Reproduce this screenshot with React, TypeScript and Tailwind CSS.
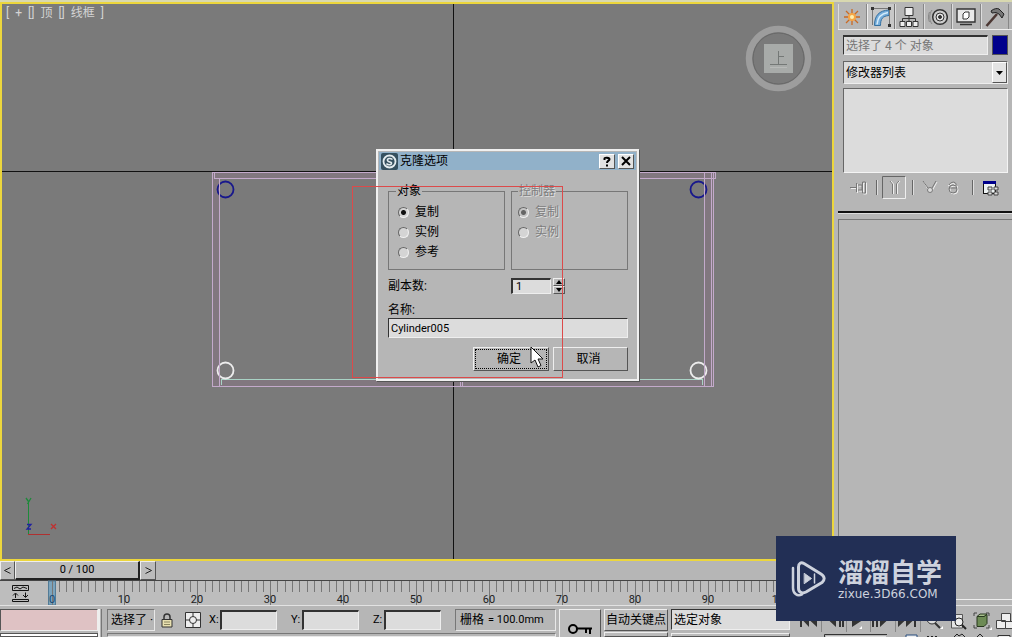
import React, { useState } from "react";

const FONT = "font-['Roboto','Noto_Sans_CJK_SC',sans-serif]";
const SUNKEN =
  "border border-t-[#333] border-l-[#333] border-b-[#eee] border-r-[#eee] bg-[#dcdcdc]";
const RAISED =
  "border border-t-[#eee] border-l-[#eee] border-b-[#555] border-r-[#555] bg-[#bbb]";
const GROOVE =
  "border border-t-[#777] border-l-[#777] border-b-[#e8e8e8] border-r-[#e8e8e8]";

function Scene() {
  return (
    <svg
      className="absolute left-0 top-0"
      width="830"
      height="555"
      viewBox="2 4 830 555"
      fill="none"
      shapeRendering="crispEdges"
      aria-hidden="true"
    >
      <g fill="#81777f">
        <path d="M212 172H715V179H212zM212 172H220V386H212zM704 172H713V386H704zM212 380H713V386H212z" />
      </g>
      <path d="M2 171.500H832M453.500 4V559" stroke="#111" />
      <path
        d="M212.500 386.500V172.500H715.500V178.500H214.500V173M219.500 178V386M212.500 386.500H713.500V172M704.500 172V386M711.500 172V386M460.500 382V386M462.500 382V386"
        stroke="#c3aacb"
      />
      <path d="M221.500 385V379.500H702.500V385" stroke="#a9d3c5" />
      <g shapeRendering="auto" strokeWidth="1.8">
        <circle cx="225.500" cy="189.500" r="8" stroke="#18188c" />
        <circle cx="698.500" cy="189.500" r="8" stroke="#18188c" />
        <circle cx="225.500" cy="370.500" r="8" stroke="#ededed" />
        <circle cx="698.500" cy="370.500" r="8" stroke="#ededed" />
      </g>
      <path d="M219.500 180V380M704.500 180V380" stroke="#c3aacb" />
      <path d="M28.500 534V503" stroke="#1d8a3a" />
      <path d="M28 534.500H50" stroke="#b03030" />
      <g shapeRendering="auto" strokeWidth="1.300">
        <path d="M26 498l2.500 3.500M31 498l-3.500 6" stroke="#1d8a3a" />
        <path d="M51 524l5 5M56 524l-5 5" stroke="#c03030" />
        <path d="M27 524.500h4l-4 4.500h4" stroke="#2020a0" />
      </g>
      <g shapeRendering="auto">
        <circle cx="778.500" cy="58.500" r="29.500" stroke="#9d9d9d" strokeWidth="6.500" />
        <circle cx="778.500" cy="58.500" r="25.500" stroke="#686868" strokeWidth="1" />
        <rect x="764" y="44" width="29" height="29" fill="#a8aba9" />
        <path d="M778.500 51V64M778.500 56.500H784M770 64.500H787" stroke="#747876" strokeWidth="1" />
        <path d="M770 67.500H787" stroke="#b8bab8" />
      </g>
    </svg>
  );
}

function Radio({
  name,
  label,
  checked,
  disabled,
  onPick,
}: {
  name: string;
  label: string;
  checked: boolean;
  disabled?: boolean;
  onPick?: () => void;
}) {
  return (
    <label
      className={
        disabled
          ? "flex h-5 items-center gap-[6px] text-[#7d7d7d] [text-shadow:1px_1px_0_#ddd]"
          : "flex h-5 items-center gap-[6px] text-black"
      }
    >
      <input
        type="radio"
        name={name}
        checked={checked}
        disabled={disabled}
        onChange={() => onPick?.()}
        className="m-0 size-[11px] shrink-0 appearance-none rounded-full border border-t-[#666] border-l-[#666] border-b-[#f0f0f0] border-r-[#f0f0f0] bg-[#d4d4d4] checked:bg-[radial-gradient(circle,#111_0_2px,#d4d4d4_3px)] disabled:checked:bg-[radial-gradient(circle,#666_0_2px,#c4c4c4_3px)]"
      />
      {label}
    </label>
  );
}

function CloneDialog() {
  const [mode, setMode] = useState("复制");
  return (
    <section
      role="dialog"
      aria-label="克隆选项"
      className="absolute left-[374px] top-[145px] w-[263px] border-2 border-[#f0f0f0] bg-[#b6b6b6] text-xs leading-4 shadow-[1px_1px_0_#555]"
    >
      <header className="flex h-5 items-center gap-[2px] border border-[#b6b6b6] bg-[#91b1c9] px-[2px]">
        <svg width="17" height="17" viewBox="0 0 17 17" fill="none" aria-hidden="true">
          <rect width="17" height="17" rx="2" fill="#35505f" />
          <circle cx="8.500" cy="8.500" r="6" stroke="#e4ecef" strokeWidth="1.800" />
          <path d="M11.500 6.500C9 4.500 6 5.500 6.500 7.500S11 8.500 10.500 10.500S6.500 12 5.500 10.500" stroke="#e4ecef" strokeWidth="1.500" />
        </svg>
        <h1 className="flex-1">克隆选项</h1>
        <button aria-label="帮助" className="flex h-[15px] w-4 items-center justify-center border border-t-white border-l-white border-b-[#555] border-r-[#555] bg-[#e2e2e2]">
          <svg width="10" height="11" viewBox="0 0 10 11" fill="none" stroke="#000" strokeWidth="2">
            <path d="M2.500 4V2.500C2.500 1.500 7.500 1.500 7.500 3.200C7.500 4.800 5 4.600 5 7M5 8.500V10.500" />
          </svg>
        </button>
        <button aria-label="关闭" className="ml-[1px] flex h-[15px] w-4 items-center justify-center border border-t-white border-l-white border-b-[#555] border-r-[#555] bg-[#e2e2e2]">
          <svg width="10" height="10" viewBox="0 0 10 10" fill="none" stroke="#000" strokeWidth="2">
            <path d="M1 1L9 9M9 1L1 9" />
          </svg>
        </button>
      </header>
      <form className="pt-3 pr-[9px] pb-2 pl-[10px]" onSubmit={(e) => e.preventDefault()}>
        <div className="grid grid-cols-[117px_1fr] gap-x-[6px]">
          <fieldset className="h-[87px] border border-[#777] px-[9px] pt-[3px]">
            <legend className="-ml-[2px] px-[1px]">对象</legend>
            {["复制", "实例", "参考"].map((m) => (
              <Radio key={m} name="object" label={m} checked={mode === m} onPick={() => setMode(m)} />
            ))}
          </fieldset>
          <fieldset className="h-[87px] border border-[#777] px-[6px] pt-[3px]">
            <legend className="px-[1px] text-[#7d7d7d] [text-shadow:1px_1px_0_#ddd]">控制器</legend>
            <Radio name="controller" label="复制" checked disabled />
            <Radio name="controller" label="实例" checked={false} disabled />
          </fieldset>
          <label htmlFor="copies" className="mt-2">副本数:</label>
          <div className="mt-2 flex h-4 gap-[2px]">
            <input id="copies" defaultValue="1" className={`${SUNKEN} w-10 border-t-2 border-l-2 px-[3px] text-[11px] leading-3`} />
            <div className="flex w-3 flex-col">
              <button type="button" aria-label="增加" className={`${RAISED} flex h-2 items-center justify-center`}>
                <svg width="6" height="4" viewBox="0 0 6 4"><path d="M3 0L6 4H0z" /></svg>
              </button>
              <button type="button" aria-label="减少" className={`${RAISED} flex h-2 items-center justify-center`}>
                <svg width="6" height="4" viewBox="0 0 6 4"><path d="M3 4L6 0H0z" /></svg>
              </button>
            </div>
          </div>
        </div>
        <label htmlFor="object-name" className="mt-2 block">名称:</label>
        <input id="object-name" defaultValue="Cylinder005" className={`${SUNKEN} block h-5 w-full px-[2px] text-[11px]`} />
        <div className="mt-[9px] flex h-6 justify-end gap-1">
          <button className="w-[76px] border border-t-[#eee] border-l-[#eee] border-b-[#555] border-r-[#555] bg-[#b6b6b6] p-[1px]">
            <span className="flex h-full items-center justify-center border border-dotted border-black pr-1">确定</span>
          </button>
          <button type="button" className="w-[75px] border border-t-[#eee] border-l-[#eee] border-b-[#555] border-r-[#555] bg-[#b6b6b6] pr-1">
            取消
          </button>
        </div>
      </form>
    </section>
  );
}

function Overlay() {
  return (
    <svg
      className="pointer-events-none absolute left-0 top-0"
      width="830"
      height="555"
      viewBox="2 4 830 555"
      fill="none"
      aria-hidden="true"
    >
      <rect x="352.500" y="186.500" width="210" height="191" stroke="#dc4a4a" />
      <path d="M531 347V363L535 360L538 367L541 365.500L538 359H543z" fill="#fff" stroke="#111" />
    </svg>
  );
}

const ticks = Array.from({ length: 101 }, (_, i) => i);
const tickX = (t: number) => Math.round(5.5 + t * 7.29);

function TimeBar() {
  return (
    <div className="flex h-[44px] flex-col">
      <div className="flex h-[19px] text-[11px] leading-4">
        <button aria-label="上一帧" className={`${RAISED} flex w-[15px] items-center justify-center`}>
          <svg width="7" height="7" viewBox="0 0 7 7" fill="none" stroke="#222"><path d="M6.500 .5L.5 3.500L6.500 6.500" /></svg>
        </button>
        <button className="w-[125px] border border-t-[#eee] border-l-[#eee] border-b-2 border-r-2 border-b-[#222] border-r-[#222] bg-[#bbb]">0 / 100</button>
        <button aria-label="下一帧" className={`${RAISED} flex w-4 items-center justify-center`}>
          <svg width="7" height="7" viewBox="0 0 7 7" fill="none" stroke="#222"><path d="M.5 .5L6.500 3.500L.5 6.500" /></svg>
        </button>
      </div>
      <div className="flex h-[25px] border-t border-[#444] bg-[#bdbdbd]">
        <svg width="46" height="24" viewBox="0 0 46 24" fill="none" stroke="#111" aria-hidden="true">
          <path d="M12.500 4.500H28.500V9.500H12.500zM12.500 18.500H28.500V20.500H12.500z" />
          <path d="M14 7.500L17 6L20 8L23 6L27 7.500M15.500 17V12.500M13 14.500L15.500 12L18 14.500M25.500 11.500V16M23 14L25.500 16.500L28 14" />
        </svg>
        <svg className="min-w-0 flex-1 overflow-visible" height="24" aria-hidden="true">
          <rect x="2.500" y="0" width="7" height="24" fill="#7ba3bc" stroke="#527b96" />
          {ticks.map((t) => (
            <line
              key={t}
              x1={tickX(t) + 0.5}
              x2={tickX(t) + 0.5}
              y1="0"
              y2={t % 10 === 0 ? 24 : 11}
              stroke="#777"
            />
          ))}
          {ticks
            .filter((t) => t % 10 === 0)
            .map((t) => (
              <text
                key={t}
                x={tickX(t)}
                y="22"
                textAnchor="middle"
                fontSize="11"
                fill={t === 0 ? "#174a75" : "#222"}
              >
                {t}
              </text>
            ))}
        </svg>
      </div>
    </div>
  );
}

const tabs = [
  {
    name: "创建",
    icon: (
      <g>
        <path d="M10 2V18M2 10H18M4 4L16 16M16 4L4 16" stroke="#c96a24" strokeWidth="1.300" />
        <circle cx="10" cy="10" r="4" fill="#f7a545" />
        <circle cx="10" cy="10" r="2" fill="#fff0b0" />
      </g>
    ),
  },
  {
    name: "修改",
    icon: (
      <g>
        <path d="M3.500 18.500C3.500 8.500 8 3.500 18 3V8.500C11.500 9 9.500 12 9.500 18.500z" fill="#75addb" stroke="#336fa0" />
        <path d="M6 17.500C6.500 10 10 6.500 17 5.500" stroke="#d5ecfa" strokeWidth="1.500" />
        <path d="M1.500 2V18M2 1.500H18M18.500 2V17" stroke="#777" />
        <path d="M0 0h3v3H0zM17 17h3v3h-3zM17 0h3v3h-3z" fill="#333" />
      </g>
    ),
  },
  {
    name: "层次",
    icon: (
      <g stroke="#333" fill="#eee">
        <path d="M10 8V14M3.500 14V11.500H16.500V14" fill="none" />
        <path d="M6 .5h8v8H6zM1 14.500h5v5H1zM7.500 14.500h5v5h-5zM14 14.500h5v5h-5z" />
      </g>
    ),
  },
  {
    name: "运动",
    icon: (
      <g stroke="#333">
        <circle cx="12" cy="10" r="7.300" strokeWidth="1.500" fill="#ccc" />
        <circle cx="12" cy="10" r="4" fill="#e5e5e5" />
        <circle cx="12" cy="10" r="1.500" fill="#333" />
        <path d="M4 3C1 7 1 13 4 17M1.500 5C0 8 0 12 1.500 15" stroke="#888" />
      </g>
    ),
  },
  {
    name: "显示",
    icon: (
      <g stroke="#333">
        <path d="M1 2H19V15H1z" fill="#e8e8e8" strokeWidth="1.400" />
        <path d="M7 7L9 5H13V10L11 12H7z" fill="#fff" />
        <path d="M4 17.500H16" strokeWidth="1.500" />
      </g>
    ),
  },
  {
    name: "工具",
    icon: (
      <g>
        <path d="M1.500 19L12 7" stroke="#4b3733" strokeWidth="2.500" />
        <path d="M6 4C9 1.500 12 1 14 2L19 7L17 11L14 7L11 5.500L7 6z" fill="#777" stroke="#222" />
      </g>
    ),
  },
];

function CommandPanel() {
  return (
    <aside className="flex w-[178px] flex-col bg-[#b6b6b6] pl-1 text-xs">
      <nav className="flex h-[28px] border-b border-[#eee] pt-[2px] pr-[3px]">
        {tabs.map((tab, i) => (
          <button
            key={tab.name}
            aria-label={tab.name}
            className={
              i === 1
                ? "flex flex-1 items-center justify-center border-l border-r border-l-[#eee] border-r-[#777] bg-[#c8c8c8]"
                : "flex flex-1 items-center justify-center border-l border-r border-l-[#ddd] border-r-[#888]"
            }
          >
            <svg width="20" height="20" viewBox="0 0 20 20" fill="none">{tab.icon}</svg>
          </button>
        ))}
      </nav>
      <div className="flex flex-col pt-[5px] pr-1 pl-[5px]">
        <div className="flex h-5 gap-1">
          <input
            aria-label="对象名称"
            defaultValue="选择了 4 个 对象"
            className={`${SUNKEN} min-w-0 flex-1 border-t-2 bg-[#c4c4c4] px-[2px] text-[#777]`}
          />
          <button aria-label="对象颜色" className="w-4 border border-[#555] bg-[#00008c]" />
        </div>
        <div className="relative mt-[6px] flex h-[23px]">
          <select
            aria-label="修改器列表"
            className="w-full appearance-none border border-t-[#666] border-l-[#666] border-b-[#eee] border-r-[#eee] bg-[#dcdcdc] px-[2px]"
          >
            <option>修改器列表</option>
          </select>
          <span className="pointer-events-none absolute top-[1px] right-[1px] bottom-[1px] flex w-[15px] items-center justify-center border border-t-white border-l-white border-b-[#555] border-r-[#555] bg-[#e4e4e4]">
            <svg width="7" height="4" viewBox="0 0 7 4"><path d="M0 0H7L3.500 4z" /></svg>
          </span>
        </div>
        <div className="mt-1 h-[85px] border border-t-[#666] border-l-[#666] border-b-[#f4f4f4] border-r-[#f4f4f4] bg-[#dcdcdc]" />
        <svg className="mt-[3px] w-full" height="24" viewBox="843 176 165 24" fill="none" aria-hidden="true">
          <g stroke="#eee" transform="translate(1 1)">
            <path d="M850 187.500H856M856.500 183V192M858 185H862V190H858M862.500 182V193H865.500V182z" />
            <path d="M923 181L929 192M936 181L931 190M947 185L952 182L957 186" />
            <circle cx="953" cy="189" r="4" />
          </g>
          <path d="M850 187.500H856M856.500 183V192M858 185H862V190H858M862.500 182V193H865.500V182z" stroke="#777" />
          <path d="M876.500 180V195M912.500 180V195M972.500 180V195" stroke="#666" />
          <path d="M877.500 180V195M913.500 180V195M973.500 180V195" stroke="#ddd" />
          <path d="M882.500 198V176.500H905" stroke="#666" />
          <path d="M883 198.500H905.500V177" stroke="#eee" />
          <path d="M890 181L892.500 184V194M899 181L896.500 184V194" stroke="#777" />
          <path d="M891 181L893.500 184V194M900 181L897.500 184V194" stroke="#eee" />
          <path d="M923 181L928 188M936 181L932 188" stroke="#777" />
          <circle cx="930" cy="190" r="2.500" stroke="#777" fill="#ddd" />
          <circle cx="953" cy="189" r="4" stroke="#777" />
          <path d="M949 188H957M949 185C951 181 957 181 956 186" stroke="#777" />
          <rect x="983.500" y="181.500" width="12" height="12" fill="#eef3f3" stroke="#111" />
          <path d="M983 181H996V184H983z" fill="#00008c" />
          <path d="M988 187h4v3h-4zM994 187h4v3h-4zM988 192h4v3h-4zM994 192h4v3h-4z" fill="#ddd" stroke="#444" />
        </svg>
      </div>
      <div className="mt-[11px] h-[3px] border-t-2 border-b border-t-[#111] border-b-[#ddd]" />
      <div className="mt-[5px] flex-1 border-t border-l border-[#777]" />
      <div className="h-[6px] border-t border-[#eee]" />
    </aside>
  );
}

function Coord({ axis }: { axis: string }) {
  return (
    <label className="mr-[14px] flex h-5 items-center text-[11px]">
      <span className="w-[11px]">{axis}:</span>
      <input className={`${SUNKEN} h-5 w-[57px] border-t-2 border-l-2`} />
    </label>
  );
}

function StatusBar() {
  return (
    <footer className="flex h-8 overflow-hidden border-t border-[#e2e2e2] bg-[#b6b6b6] pt-[3px] text-xs">
      <div className="flex w-[98px] shrink-0 flex-col gap-[2px]">
        <div className="h-[22px] shrink-0 border border-t-[#555] border-l-[#555] border-b-[#eee] border-r-[#eee] bg-[#dfc2c4]" />
        <div className="h-4 border border-[#555] bg-white" />
      </div>
      <div className="mr-[5px] w-1 shrink-0 border-l-2 border-r border-l-[#eee] border-r-[#777]" />
      <div className="flex w-[449px] shrink-0 flex-col gap-[2px]">
        <div className="flex h-[22px] shrink-0 items-center">
          <div className={`${GROOVE} flex h-[22px] w-12 items-center overflow-hidden pl-[3px] whitespace-nowrap`}>选择了 ·</div>
          <svg className="ml-[6px]" width="12" height="15" viewBox="0 0 12 15" fill="none" stroke="#333" aria-hidden="true">
            <path d="M3 7V4C3 0 9 0 9 4V7" strokeWidth="1.500" />
            <path d="M1 6.500H11V14H1z" fill="#e8e0b0" />
            <path d="M3 9H9M3 11.500H9" stroke="#8b8660" />
          </svg>
          <svg className="ml-[12px] mr-[8px]" width="16" height="16" viewBox="0 0 16 16" fill="none" stroke="#333" aria-hidden="true">
            <path d="M.5 .5H15.500V15.500H.5z" fill="#eee" />
            <circle cx="8" cy="8" r="3.500" />
            <path d="M8 1V4.500M8 11.500V15M1 8H4.500M11.500 8H15" />
          </svg>
          <Coord axis="X" />
          <Coord axis="Y" />
          <Coord axis="Z" />
          <div className={`${GROOVE} flex h-[22px] flex-1 items-center pl-1 whitespace-nowrap`}>
            栅格 <span className="ml-1 text-[11px]">= 100.0mm</span>
          </div>
        </div>
        <div className={`${GROOVE} h-4`} />
      </div>
      <button aria-label="设置关键点" className={`${RAISED} ml-[3px] flex h-10 w-[42px] shrink-0 items-center justify-center`}>
        <svg width="25" height="12" viewBox="0 0 25 12" fill="none" stroke="#000" strokeWidth="2">
          <circle cx="5" cy="6" r="4" />
          <path d="M9 5.500H24M18 6V10M22 6V11" />
        </svg>
      </button>
      <div className="ml-[3px] flex w-16 shrink-0 flex-col gap-[1px]">
        <button className={`${RAISED} h-[22px] shrink-0 whitespace-nowrap`}>自动关键点</button>
        <div className={`${RAISED} h-4`} />
      </div>
      <div className="ml-[3px] flex w-[119px] shrink-0 flex-col gap-[3px]">
        <select aria-label="关键点过滤" className={`${SUNKEN} h-[21px] w-full shrink-0 appearance-none px-[2px]`}>
          <option>选定对象</option>
        </select>
        <div className={`${RAISED} h-4`} />
      </div>
      <svg className="ml-[6px] shrink-0" width="216" height="29" viewBox="796 608 216 29" fill="none" aria-hidden="true">
        <path d="M821.500 609V631M846.500 609V631M870.500 609V631M895.500 609V631M920.500 609V631" stroke="#888" />
        <path d="M800 613h2v13h-2zM809 613v13l-6-6.500zM817 613v13l-7-6.500zM836 613v13l-7-6.500zM842 613h2v13h-2zM839 613h2v13h-2zM852 613l10 6.500l-10 6.500zM872 613h2v13h-2zM876 613h2v13h-2zM880 613l7 6.500l-7 6.500zM898 613l7 6.500l-7 6.500zM906 613l7 6.500l-7 6.500zM914 613h2v13h-2z" fill="#333" />
        <circle cx="932" cy="618" r="5" fill="#ddd" stroke="#333" />
        <path d="M935 622l5 5" stroke="#333" strokeWidth="2" />
        <path d="M951.500 613.500H962.500V627H951.500z" fill="#e4e4e4" stroke="#555" />
        <circle cx="959" cy="621" r="4" fill="#eee" stroke="#222" />
        <path d="M962 624l4 4" stroke="#222" strokeWidth="2" />
        <path d="M977 615.500h7l3-2v9l-3 3h-7z" fill="#6d8b55" stroke="#26371d" />
        <path d="M977 615.500l3-2.500h7l-3 2.500z" fill="#a9c18e" stroke="#26371d" />
        <path d="M974 615v-3h3M986 612h3v3M974 624v3h3M989 624v3h-3" stroke="#444" />
        <path d="M1001.500 612.500h9v8h-9zM996.500 619.500h9v8h-9zM1005.500 620.500h7v7h-7z" fill="#eee" stroke="#444" />
        <path d="M862 625v3h-3zM943 625v3h-3zM992 626v3h-3z" fill="#fff" />
        <path d="M824.500 637V633.500H887" stroke="#333" />
        <path d="M826 635H886V637H826z" fill="#ddd" />
        <path d="M906 634h11v3h-11z" fill="#eee" stroke="#244a7c" />
        <path d="M927 635.500H939" stroke="#222" strokeDasharray="2 2" />
        <path d="M954 636l3-3l2 2l3-2l3 3M977 636l3-3l3 3" stroke="#222" />
        <path d="M998 634.500h12V637h-12z" fill="#eee" stroke="#333" />
      </svg>
    </footer>
  );
}

function Brand() {
  return (
    <a
      href="#zixue"
      className="absolute right-[56px] bottom-4 flex h-[85px] w-[180px] items-center gap-3 bg-[#222f55] pl-[15px] text-[#cdd2dd]"
    >
      <svg width="35" height="36" viewBox="0 0 35 36" fill="none" stroke="currentColor" strokeLinejoin="round" strokeLinecap="round" aria-hidden="true">
        <path d="M7.500 6C7.500 2 10 1 13 2.500L30 13C34 15.500 34 19 31 21.500L15 31C11 33 7.500 31.500 7.500 27z" strokeWidth="3" />
        <path d="M2 7V27C2 32 6 36 11 33.500" strokeWidth="2.500" />
        <path d="M13.500 12.500L20.500 17.500L13.500 22.500z" fill="currentColor" strokeWidth="1" />
        <path d="M23.500 13V22" strokeWidth="1.500" />
      </svg>
      <span className="flex flex-col">
        <strong className="text-[26px] leading-[30px] font-bold whitespace-nowrap">溜溜自学</strong>
        <span className="font-['DejaVu_Sans',sans-serif] text-xs leading-3 whitespace-nowrap">zixue.3D66.COM</span>
      </span>
    </a>
  );
}

export default function App() {
  return (
    <div className={`${FONT} relative flex h-screen flex-col overflow-hidden bg-[#b6b6b6] text-black`}>
      <div className="h-[2px] shrink-0 bg-[#d8d8b0]" />
      <div className="flex min-h-0 flex-1">
        <main className="flex min-w-0 flex-1 flex-col">
          <div className="relative min-h-0 flex-1 overflow-hidden border-2 border-[#ecd63c] bg-[#7a7a7a]">
            <Scene />
            <p className="flex gap-[6px] pl-1 text-xs leading-[18px] text-[#d4d4d4]">
              <span>[</span>
              <span>+</span>
              <span>[]</span>
              <span>顶</span>
              <span>[]</span>
              <span>线框</span>
              <span>]</span>
            </p>
            <CloneDialog />
            <Overlay />
          </div>
          <TimeBar />
        </main>
        <CommandPanel />
      </div>
      <StatusBar />
      <Brand />
    </div>
  );
}
